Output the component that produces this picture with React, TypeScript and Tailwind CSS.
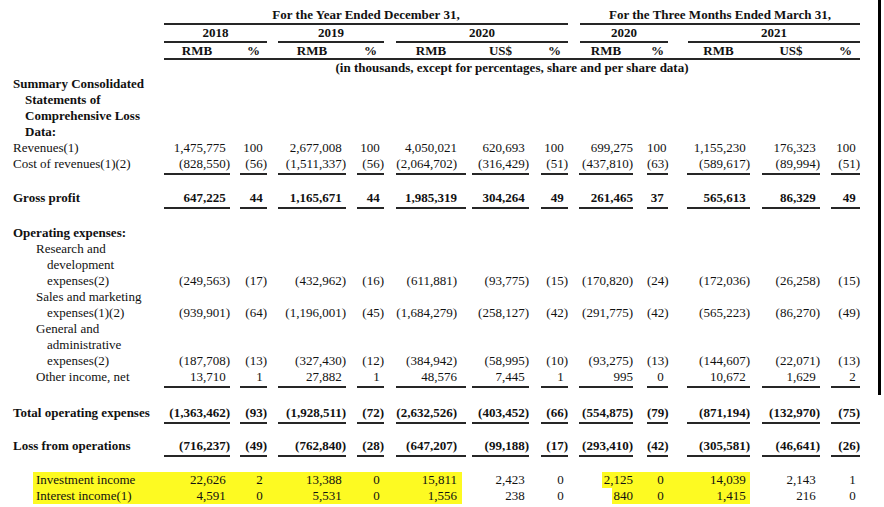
type Col = { w: string; ml: string; hang: boolean };

// column boxes, measured off the scan (left edge of underline -> right edge of text)
const cols: Col[] = [
  { w: "w-[66px]", ml: "", hang: true },
  { w: "w-[27px]", ml: "ml-[10px]", hang: true },
  { w: "w-[68px]", ml: "ml-[11px]", hang: true },
  { w: "w-[27px]", ml: "ml-[11px]", hang: true },
  { w: "w-[70px] pr-[9px]", ml: "ml-[12px]", hang: false },
  { w: "w-[57px]", ml: "ml-[6px]", hang: true },
  { w: "w-[27px]", ml: "ml-[12px]", hang: true },
  { w: "w-[54px]", ml: "ml-[11px]", hang: false },
  { w: "w-[21px]", ml: "ml-[14px]", hang: true },
  { w: "w-[63px]", ml: "ml-[19px]", hang: true },
  { w: "w-[58px]", ml: "ml-[12px]", hang: true },
  { w: "w-[29px]", ml: "ml-[11px]", hang: true },
];

const units = ["RMB", "%", "RMB", "%", "RMB", "US$", "%", "RMB", "%", "RMB", "US$", "%"];

const indents = {
  0: "pl-[13px]",
  1: "pl-[25px]",
  2: "pl-[36px]",
  3: "pl-[47px]",
};

function Row({
  label,
  indent = 0,
  values,
  bold,
  line,
  className = "",
}: {
  label: string;
  indent?: 0 | 1 | 2 | 3;
  values?: string[];
  bold?: boolean;
  line?: boolean;
  className?: string;
}) {
  return (
    <div className={`flex items-start leading-4 ${bold ? "font-bold" : ""} ${className}`}>
      <div className={`w-[164px] shrink-0 whitespace-nowrap ${indents[indent]}`}>{label}</div>
      {values &&
        values.map((v, i) => (
          <div
            key={i}
            className={`shrink-0 text-right whitespace-nowrap ${cols[i].w} ${cols[i].ml} ${
              line ? "border-b-2 border-[#262626] pb-[1px]" : ""
            }`}
          >
            {v}
            {cols[i].hang && !v.endsWith(")") && <span className="invisible">)</span>}
          </div>
        ))}
    </div>
  );
}

export default function App() {
  return (
    <div className="flex bg-white text-[13px] text-[#111] font-['Liberation_Serif',serif]">
      <div className="w-[878px] shrink-0 pt-[7px] pb-[3px]">
        {/* header */}
        <div className="flex pl-[164px] font-bold leading-4">
          <div className="w-[404px] border-b-2 border-[#262626] text-center">For the Year Ended December 31,</div>
          <div className="ml-[12px] w-[280px] border-b-2 border-[#262626] text-center">
            For the Three Months Ended March 31,
          </div>
        </div>
        <div className="flex pl-[164px] font-bold leading-4">
          <div className="w-[103px] border-b-2 border-[#262626] text-center">2018</div>
          <div className="ml-[11px] w-[106px] border-b-2 border-[#262626] text-center">2019</div>
          <div className="ml-[12px] w-[172px] border-b-2 border-[#262626] text-center">2020</div>
          <div className="ml-[12px] w-[88px] border-b-2 border-[#262626] text-center">2020</div>
          <div className="ml-[20px] w-[172px] border-b-2 border-[#262626] text-center">2021</div>
        </div>
        <div className="ml-[164px] flex w-[696px] border-b-2 border-[#262626] font-bold leading-[15px]">
          {units.map((u, i) => (
            <div key={i} className={`shrink-0 text-center ${cols[i].w.split(" ")[0]} ${cols[i].ml}`}>
              {u}
            </div>
          ))}
        </div>
        <div className="ml-[164px] w-[696px] text-center font-bold leading-4">
          (in thousands, except for percentages, share and per share data)
        </div>

        {/* body */}
        <Row label="Summary Consolidated" bold />
        <Row label="Statements of" indent={1} bold />
        <Row label="Comprehensive Loss" indent={1} bold />
        <Row label="Data:" indent={1} bold />
        <Row
          label="Revenues(1)"
          values={["1,475,775", "100", "2,677,008", "100", "4,050,021", "620,693", "100", "699,275", "100", "1,155,230", "176,323", "100"]}
        />
        <Row
          label="Cost of revenues(1)(2)"
          line
          values={["(828,550)", "(56)", "(1,511,337)", "(56)", "(2,064,702)", "(316,429)", "(51)", "(437,810)", "(63)", "(589,617)", "(89,994)", "(51)"]}
        />
        <Row
          label="Gross profit"
          bold
          line
          className="mt-[15px]"
          values={["647,225", "44", "1,165,671", "44", "1,985,319", "304,264", "49", "261,465", "37", "565,613", "86,329", "49"]}
        />

        <Row label="Operating expenses:" bold className="mt-[16px]" />
        <Row label="Research and" indent={2} />
        <Row label="development" indent={3} />
        <Row
          label="expenses(2)"
          indent={3}
          values={["(249,563)", "(17)", "(432,962)", "(16)", "(611,881)", "(93,775)", "(15)", "(170,820)", "(24)", "(172,036)", "(26,258)", "(15)"]}
        />
        <Row label="Sales and marketing" indent={2} />
        <Row
          label="expenses(1)(2)"
          indent={3}
          values={["(939,901)", "(64)", "(1,196,001)", "(45)", "(1,684,279)", "(258,127)", "(42)", "(291,775)", "(42)", "(565,223)", "(86,270)", "(49)"]}
        />
        <Row label="General and" indent={2} />
        <Row label="administrative" indent={3} />
        <Row
          label="expenses(2)"
          indent={3}
          values={["(187,708)", "(13)", "(327,430)", "(12)", "(384,942)", "(58,995)", "(10)", "(93,275)", "(13)", "(144,607)", "(22,071)", "(13)"]}
        />
        <Row
          label="Other income, net"
          indent={2}
          line
          values={["13,710", "1", "27,882", "1", "48,576", "7,445", "1", "995", "0", "10,672", "1,629", "2"]}
        />

        <Row
          label="Total operating expenses"
          bold
          line
          className="mt-[17px]"
          values={["(1,363,462)", "(93)", "(1,928,511)", "(72)", "(2,632,526)", "(403,452)", "(66)", "(554,875)", "(79)", "(871,194)", "(132,970)", "(75)"]}
        />
        <Row
          label="Loss from operations"
          bold
          line
          className="mt-[14px]"
          values={["(716,237)", "(49)", "(762,840)", "(28)", "(647,207)", "(99,188)", "(17)", "(293,410)", "(42)", "(305,581)", "(46,641)", "(26)"]}
        />

        <Row
          label="Investment income"
          indent={2}
          className="mt-[15px] bg-[linear-gradient(to_right,transparent_33px,#fdfa22_33px,#fdfa22_462px,transparent_462px,transparent_602px,#fdfa22_602px,#fdfa22_750px,transparent_750px)]"
          values={["22,626", "2", "13,388", "0", "15,811", "2,423", "0", "2,125", "0", "14,039", "2,143", "1"]}
        />
        <Row
          label="Interest income(1)"
          indent={2}
          className="bg-[linear-gradient(to_right,transparent_33px,#fdfa22_33px,#fdfa22_462px,transparent_462px,transparent_612px,#fdfa22_612px,#fdfa22_750px,transparent_750px)]"
          values={["4,591", "0", "5,531", "0", "1,556", "238", "0", "840", "0", "1,415", "216", "0"]}
        />
      </div>
      <div className="h-[395px] w-[3px] shrink-0 bg-black" />
    </div>
  );
}
